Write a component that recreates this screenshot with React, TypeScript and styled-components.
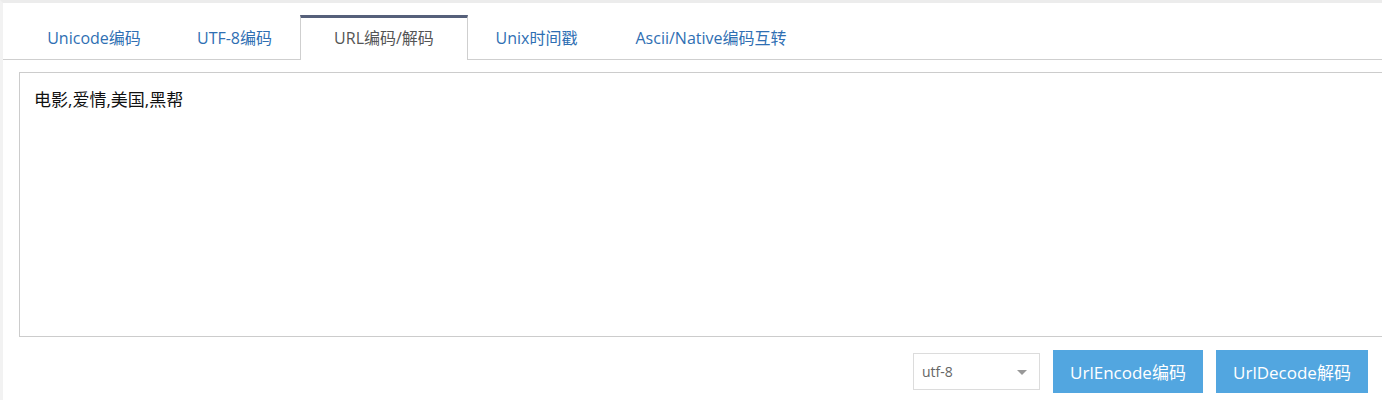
import React, { useState } from 'react';
import styled, { createGlobalStyle } from 'styled-components';

const GlobalStyle = createGlobalStyle`
  html, body {
    margin: 0;
    padding: 0;
    background: #fff;
  }
  * {
    box-sizing: border-box;
  }
`;

const Page = styled.div`
  min-height: 400px;
  overflow: hidden;
  background: #fff;
  border-top: 3px solid #ececec;
  border-left: 3px solid #f2f2f2;
  font-family: "Open Sans", "Noto Sans CJK SC", sans-serif;
`;

const TabBar = styled.div`
  display: flex;
  align-items: flex-end;
  margin-top: 12px;
  padding-left: 16px;
  border-bottom: 1px solid #cfcfcf;
`;

const Tab = styled.div<{ $active?: boolean; $width: number }>`
  width: ${p => p.$width}px;
  height: ${p => (p.$active ? '45px' : '44px')};
  margin-bottom: ${p => (p.$active ? '-1px' : '0')};
  line-height: ${p => (p.$active ? '41px' : '46px')};
  text-align: center;
  font-size: 16px;
  color: ${p => (p.$active ? '#555' : '#2f6fb3')};
  cursor: pointer;
  background: #fff;
  border: ${p => (p.$active ? '1px solid #cfcfcf' : 'none')};
  border-top: ${p => (p.$active ? '3px solid #56607a' : 'none')};
  border-bottom: none;
  white-space: nowrap;
`;

const Body = styled.div`
  padding: 12px 0 0 16px;
`;

const Editor = styled.textarea`
  display: block;
  width: 1420px;
  height: 265px;
  padding: 13px 14px;
  border: 1px solid #cccccc;
  resize: none;
  outline: none;
  font-family: "Open Sans", "Noto Sans CJK SC", sans-serif;
  font-size: 17px;
  color: #111;
`;

const Actions = styled.div`
  display: flex;
  justify-content: flex-end;
  align-items: center;
  gap: 13px;
  margin-top: 13px;
  padding-right: 14px;
`;

const SelectBox = styled.div`
  position: relative;
  width: 127px;
  height: 37px;
  border: 1px solid #dcdcdc;
  padding-left: 8px;
  line-height: 35px;
  font-size: 14px;
  color: #666;
  background: #fff;
`;

const Caret = styled.span`
  position: absolute;
  right: 12px;
  top: 16px;
  width: 0;
  height: 0;
  border-left: 5px solid transparent;
  border-right: 5px solid transparent;
  border-top: 5px solid #999;
`;

const Button = styled.button<{ $width: number }>`
  width: ${p => p.$width}px;
  height: 43px;
  border: none;
  background: #52a6e0;
  color: #fff;
  font-family: "Open Sans", "Noto Sans CJK SC", sans-serif;
  font-size: 17px;
  cursor: pointer;
  padding: 0;
`;

const tabs = [
  { label: 'Unicode编码', width: 150 },
  { label: 'UTF-8编码', width: 131 },
  { label: 'URL编码/解码', width: 168 },
  { label: 'Unix时间戳', width: 137 },
  { label: 'Ascii/Native编码互转', width: 212 },
];

const App: React.FC = () => {
  const [active, setActive] = useState(2);
  const [text, setText] = useState('电影,爱情,美国,黑帮');

  return (
    <Page>
      <GlobalStyle />
      <TabBar>
        {tabs.map((t, i) => (
          <Tab key={t.label} $width={t.width} $active={i === active} onClick={() => setActive(i)}>
            {t.label}
          </Tab>
        ))}
      </TabBar>
      <Body>
        <Editor value={text} onChange={e => setText(e.target.value)} />
        <Actions>
          <SelectBox>
            utf-8
            <Caret />
          </SelectBox>
          <Button $width={150}>UrlEncode编码</Button>
          <Button $width={152}>UrlDecode解码</Button>
        </Actions>
      </Body>
    </Page>
  );
};

export default App;
